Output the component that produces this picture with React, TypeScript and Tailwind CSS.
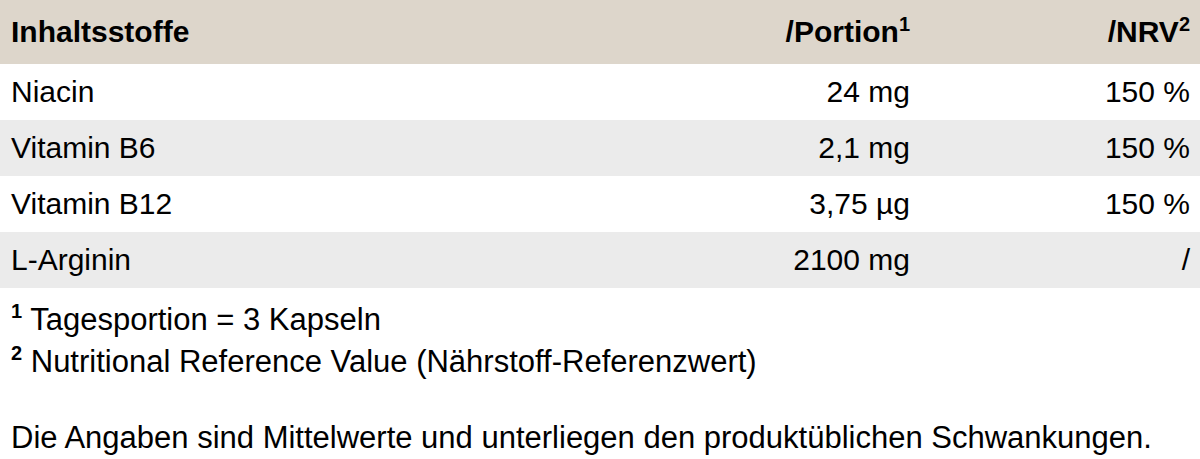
const rows = [
  { name: "Niacin", portion: "24 mg", nrv: "150 %" },
  { name: "Vitamin B6", portion: "2,1 mg", nrv: "150 %" },
  { name: "Vitamin B12", portion: "3,75 µg", nrv: "150 %" },
  { name: "L-Arginin", portion: "2100 mg", nrv: "/" },
]

function Sup({ n, head }: { n: string; head?: boolean }) {
  return (
    <span className={`text-[20px] font-bold align-top relative ${head ? "-top-[3px]" : "-top-[9px]"}`}>
      {n}
    </span>
  )
}

export default function App() {
  return (
    <div className="w-[1200px] h-[459px] bg-white text-black font-['Liberation_Sans',Arial,sans-serif] text-[30px] leading-none overflow-hidden">
      <table className="w-full border-collapse table-fixed">
        <colgroup>
          <col className="w-[610px]" />
          <col className="w-[310px]" />
          <col className="w-[280px]" />
        </colgroup>
        <thead>
          <tr className="bg-[#ddd6cb] h-[64px]">
            <th className="text-left font-bold pl-[11px]">Inhaltsstoffe</th>
            <th className="text-right font-bold pr-[10px]">
              /Portion<Sup n="1" head />
            </th>
            <th className="text-right font-bold pr-[10px]">
              /NRV<Sup n="2" head />
            </th>
          </tr>
        </thead>
        <tbody>
          {rows.map((r, i) => (
            <tr key={r.name} className={`h-[56px] ${i % 2 ? "bg-[#ebebeb]" : "bg-white"}`}>
              <td className="pl-[11px]">{r.name}</td>
              <td className="text-right pr-[10px]">{r.portion}</td>
              <td className="text-right pr-[10px]">{r.nrv}</td>
            </tr>
          ))}
        </tbody>
      </table>
      <div className="pl-[11px] pt-[11px] leading-[42px] text-[31px]">
        <p>
          <Sup n="1" /> Tagesportion = 3 Kapseln
        </p>
        <p>
          <Sup n="2" /> Nutritional Reference Value (Nährstoff-Referenzwert)
        </p>
        <p className="mt-[34px]">Die Angaben sind Mittelwerte und unterliegen den produktüblichen Schwankungen.</p>
      </div>
    </div>
  )
}
